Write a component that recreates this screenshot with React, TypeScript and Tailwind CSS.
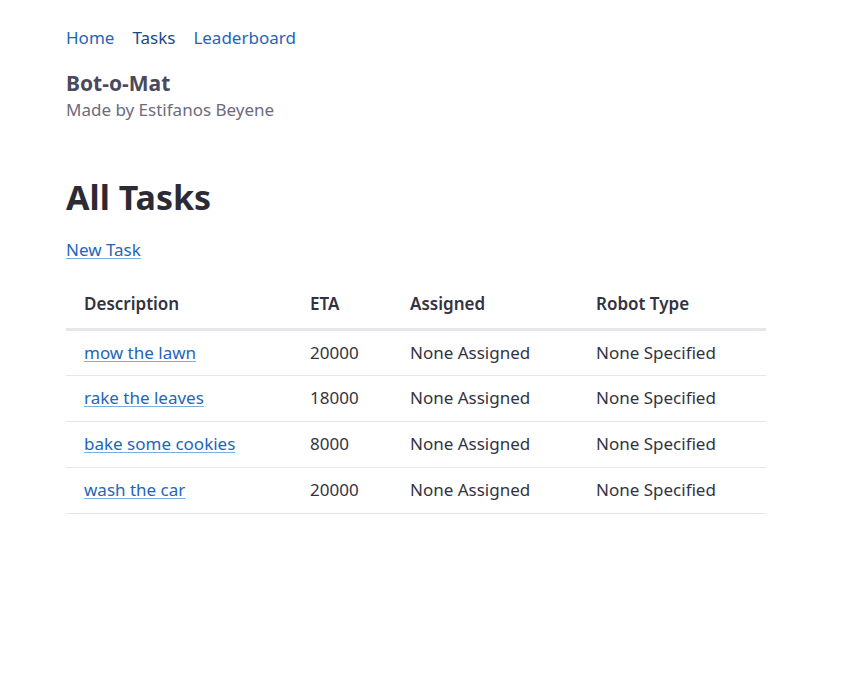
const tasks = [
  { description: "mow the lawn", eta: 20000 },
  { description: "rake the leaves", eta: 18000 },
  { description: "bake some cookies", eta: 8000 },
  { description: "wash the car", eta: 20000 },
];

export default function App() {
  return (
    <div className="min-h-screen bg-white font-['Noto_Sans',sans-serif] text-[#33333f]">
      <div className="w-[700px] ml-[66px] pt-[26px]">
        {/* Nav */}
        <nav className="flex gap-[18px] text-[17px] leading-[24px]">
          <a href="#" className="text-[#1f66b8]">Home</a>
          <a href="#" className="text-[#174a8a]">Tasks</a>
          <a href="#" className="text-[#1f66b8]">Leaderboard</a>
        </nav>

        {/* Header */}
        <header className="mt-[18px]">
          <div className="text-[21px] leading-[30px] font-bold text-[#4a4a5c]">Bot-o-Mat</div>
          <div className="text-[17px] leading-[24px] text-[#6b6b7d]">Made by Estifanos Beyene</div>
        </header>

        <h1 className="mt-[53px] text-[34px] leading-[44px] font-bold text-[#2b2b35]">All Tasks</h1>

        <a href="#" className="mt-[19px] inline-block text-[17px] leading-[24px] text-[#1f66b8] underline decoration-[#7aaee0] underline-offset-[2px]">
          New Task
        </a>

        <table className="mt-[20px] w-full text-[17px] text-left border-collapse">
          <thead>
            <tr className="border-b-[3px] border-[#e6e6ec]">
              <th className="w-[226px] pl-[18px] h-[47px] pb-[2px] font-semibold text-[#33333f]">Description</th>
              <th className="w-[100px] pl-[18px] pb-[2px] font-semibold text-[#33333f]">ETA</th>
              <th className="w-[186px] pl-[18px] pb-[2px] font-semibold text-[#33333f]">Assigned</th>
              <th className="pl-[18px] pb-[2px] font-semibold text-[#33333f]">Robot Type</th>
            </tr>
          </thead>
          <tbody>
            {tasks.map((t) => (
              <tr key={t.description} className="border-b border-[#e6e6ec]">
                <td className="pl-[18px] h-[46px]">
                  <a href="#" className="text-[#1f66b8] underline decoration-[#7aaee0] underline-offset-[2px]">
                    {t.description}
                  </a>
                </td>
                <td className="pl-[18px]">{t.eta}</td>
                <td className="pl-[18px]">None Assigned</td>
                <td className="pl-[18px]">None Specified</td>
              </tr>
            ))}
          </tbody>
        </table>
      </div>
    </div>
  );
}
